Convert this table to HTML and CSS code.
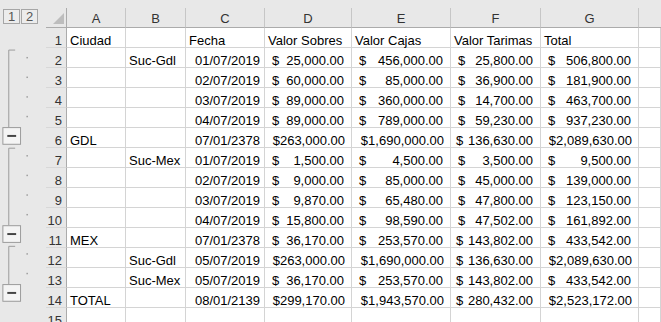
FILE: index.html
```html
<!DOCTYPE html>
<html lang="es">
<head>
<meta charset="utf-8">
<title>Hoja</title>
<link rel="stylesheet" href="styles.css">
</head>
<body>
<div class="app">
  <div class="outline">
    <div class="levels"><span class="lvl">1</span><span class="lvl">2</span></div>
    <svg class="groups" width="46" height="300" viewBox="0 0 46 300">
      <g stroke="#9a9a9a" stroke-width="1" fill="none">
        <path d="M15 22.5H8.5V101"/>
        <path d="M15 122.5H8.5V201"/>
        <path d="M15 222.5H8.5V261"/>
      </g>
      <g fill="#f4f4f4" stroke="#9a9a9a" stroke-width="1">
        <rect x="2.5" y="101.5" width="18" height="17"/>
        <rect x="2.5" y="201.5" width="18" height="17"/>
        <rect x="2.5" y="261.5" width="18" height="17"/>
      </g>
      <g fill="#444">
        <rect x="7" y="109" width="9" height="2"/>
        <rect x="7" y="209" width="9" height="2"/>
        <rect x="7" y="269" width="9" height="2"/>
      </g>
      <g fill="#9c9c9c">
        <rect x="26.5" y="29.5" width="1.5" height="1.5"/>
        <rect x="26.5" y="49.5" width="1.5" height="1.5"/>
        <rect x="26.5" y="69.5" width="1.5" height="1.5"/>
        <rect x="26.5" y="89.5" width="1.5" height="1.5"/>
        <rect x="26.5" y="129.5" width="1.5" height="1.5"/>
        <rect x="26.5" y="149.5" width="1.5" height="1.5"/>
        <rect x="26.5" y="169.5" width="1.5" height="1.5"/>
        <rect x="26.5" y="189.5" width="1.5" height="1.5"/>
        <rect x="26.5" y="229.5" width="1.5" height="1.5"/>
        <rect x="26.5" y="249.5" width="1.5" height="1.5"/>
      </g>
    </svg>
  </div>
  <div class="sheet">
    <div class="row head">
      <div class="corner"><svg width="11" height="11" viewBox="0 0 11 11"><path d="M11 0V11H0Z" fill="#bdbdbd"/></svg></div>
      <div class="ch">A</div><div class="ch">B</div><div class="ch">C</div><div class="ch">D</div><div class="ch">E</div><div class="ch">F</div><div class="ch">G</div><div class="ch last"></div>
    </div>
    <div class="row">
      <div class="rn">1</div>
      <div class="c">Ciudad</div><div class="c"></div><div class="c">Fecha</div><div class="c">Valor Sobres</div><div class="c">Valor Cajas</div><div class="c">Valor Tarimas</div><div class="c">Total</div><div class="c"></div>
    </div>
    <div class="row">
      <div class="rn">2</div>
      <div class="c"></div><div class="c">Suc-Gdl</div><div class="c d">01/07/2019</div>
      <div class="c m"><span>$</span><span>25,000.00</span></div>
      <div class="c m"><span>$</span><span>456,000.00</span></div>
      <div class="c m"><span>$</span><span>25,800.00</span></div>
      <div class="c m"><span>$</span><span>506,800.00</span></div><div class="c"></div>
    </div>
    <div class="row">
      <div class="rn">3</div>
      <div class="c"></div><div class="c"></div><div class="c d">02/07/2019</div>
      <div class="c m"><span>$</span><span>60,000.00</span></div>
      <div class="c m"><span>$</span><span>85,000.00</span></div>
      <div class="c m"><span>$</span><span>36,900.00</span></div>
      <div class="c m"><span>$</span><span>181,900.00</span></div><div class="c"></div>
    </div>
    <div class="row">
      <div class="rn">4</div>
      <div class="c"></div><div class="c"></div><div class="c d">03/07/2019</div>
      <div class="c m"><span>$</span><span>89,000.00</span></div>
      <div class="c m"><span>$</span><span>360,000.00</span></div>
      <div class="c m"><span>$</span><span>14,700.00</span></div>
      <div class="c m"><span>$</span><span>463,700.00</span></div><div class="c"></div>
    </div>
    <div class="row">
      <div class="rn">5</div>
      <div class="c"></div><div class="c"></div><div class="c d">04/07/2019</div>
      <div class="c m"><span>$</span><span>89,000.00</span></div>
      <div class="c m"><span>$</span><span>789,000.00</span></div>
      <div class="c m"><span>$</span><span>59,230.00</span></div>
      <div class="c m"><span>$</span><span>937,230.00</span></div><div class="c"></div>
    </div>
    <div class="row">
      <div class="rn">6</div>
      <div class="c">GDL</div><div class="c"></div><div class="c d">07/01/2378</div>
      <div class="c m t"><span>$</span><span>263,000.00</span></div>
      <div class="c m t"><span>$</span><span>1,690,000.00</span></div>
      <div class="c m f"><span>$</span><span>136,630.00</span></div>
      <div class="c m t"><span>$</span><span>2,089,630.00</span></div><div class="c"></div>
    </div>
    <div class="row">
      <div class="rn">7</div>
      <div class="c"></div><div class="c">Suc-Mex</div><div class="c d">01/07/2019</div>
      <div class="c m"><span>$</span><span>1,500.00</span></div>
      <div class="c m"><span>$</span><span>4,500.00</span></div>
      <div class="c m"><span>$</span><span>3,500.00</span></div>
      <div class="c m"><span>$</span><span>9,500.00</span></div><div class="c"></div>
    </div>
    <div class="row">
      <div class="rn">8</div>
      <div class="c"></div><div class="c"></div><div class="c d">02/07/2019</div>
      <div class="c m"><span>$</span><span>9,000.00</span></div>
      <div class="c m"><span>$</span><span>85,000.00</span></div>
      <div class="c m"><span>$</span><span>45,000.00</span></div>
      <div class="c m"><span>$</span><span>139,000.00</span></div><div class="c"></div>
    </div>
    <div class="row">
      <div class="rn">9</div>
      <div class="c"></div><div class="c"></div><div class="c d">03/07/2019</div>
      <div class="c m"><span>$</span><span>9,870.00</span></div>
      <div class="c m"><span>$</span><span>65,480.00</span></div>
      <div class="c m"><span>$</span><span>47,800.00</span></div>
      <div class="c m"><span>$</span><span>123,150.00</span></div><div class="c"></div>
    </div>
    <div class="row">
      <div class="rn">10</div>
      <div class="c"></div><div class="c"></div><div class="c d">04/07/2019</div>
      <div class="c m"><span>$</span><span>15,800.00</span></div>
      <div class="c m"><span>$</span><span>98,590.00</span></div>
      <div class="c m"><span>$</span><span>47,502.00</span></div>
      <div class="c m"><span>$</span><span>161,892.00</span></div><div class="c"></div>
    </div>
    <div class="row">
      <div class="rn">11</div>
      <div class="c">MEX</div><div class="c"></div><div class="c d">07/01/2378</div>
      <div class="c m"><span>$</span><span>36,170.00</span></div>
      <div class="c m"><span>$</span><span>253,570.00</span></div>
      <div class="c m f"><span>$</span><span>143,802.00</span></div>
      <div class="c m"><span>$</span><span>433,542.00</span></div><div class="c"></div>
    </div>
    <div class="row">
      <div class="rn">12</div>
      <div class="c"></div><div class="c">Suc-Gdl</div><div class="c d">05/07/2019</div>
      <div class="c m t"><span>$</span><span>263,000.00</span></div>
      <div class="c m t"><span>$</span><span>1,690,000.00</span></div>
      <div class="c m f"><span>$</span><span>136,630.00</span></div>
      <div class="c m t"><span>$</span><span>2,089,630.00</span></div><div class="c"></div>
    </div>
    <div class="row">
      <div class="rn">13</div>
      <div class="c"></div><div class="c">Suc-Mex</div><div class="c d">05/07/2019</div>
      <div class="c m"><span>$</span><span>36,170.00</span></div>
      <div class="c m"><span>$</span><span>253,570.00</span></div>
      <div class="c m f"><span>$</span><span>143,802.00</span></div>
      <div class="c m"><span>$</span><span>433,542.00</span></div><div class="c"></div>
    </div>
    <div class="row">
      <div class="rn">14</div>
      <div class="c">TOTAL</div><div class="c"></div><div class="c d">08/01/2139</div>
      <div class="c m t"><span>$</span><span>299,170.00</span></div>
      <div class="c m t"><span>$</span><span>1,943,570.00</span></div>
      <div class="c m f"><span>$</span><span>280,432.00</span></div>
      <div class="c m t"><span>$</span><span>2,523,172.00</span></div><div class="c"></div>
    </div>
    <div class="row">
      <div class="rn">15</div>
      <div class="c"></div><div class="c"></div><div class="c"></div><div class="c"></div><div class="c"></div><div class="c"></div><div class="c"></div><div class="c"></div>
    </div>
  </div>
</div>
</body>
</html>
```
FILE: styles.css
```css
html, body {
  margin: 0;
  padding: 0;
  background: #ffffff;
}
body {
  font-family: "Liberation Sans", Arial, sans-serif;
  font-size: 13px;
  color: #000;
  overflow: hidden;
}
.app {
  display: flex;
  width: 661px;
  height: 322px;
  overflow: hidden;
}
.outline {
  flex: 0 0 46px;
  width: 46px;
  background: #e8e8e8;
  display: flex;
  flex-direction: column;
}
.levels {
  height: 28px;
  box-sizing: border-box;
  padding: 9px 0 0 3px;
  display: flex;
  gap: 1px;
}
.lvl {
  box-sizing: border-box;
  width: 17px;
  height: 15px;
  border: 1px solid #a6a6a6;
  background: #ececec;
  color: #555;
  font-size: 13px;
  line-height: 13px;
  text-align: center;
}
.groups {
  display: block;
}
.sheet {
  flex: 1 1 auto;
  display: flex;
  flex-direction: column;
}
.row {
  display: grid;
  grid-template-columns: 21px 59px 60px 79px 87px 99px 90px 98px 1fr;
  height: 20px;
  flex: 0 0 20px;
}
.row.head {
  height: 28px;
  flex: 0 0 28px;
  box-sizing: border-box;
  padding-top: 8px;
  background: #e8e8e8;
}
.corner {
  box-sizing: border-box;
  height: 20px;
  border-right: 1px solid #ababab;
  border-bottom: 1px solid #ababab;
  display: flex;
  justify-content: flex-end;
  align-items: flex-end;
  padding: 0 2px 3px 0;
}
.corner svg {
  display: block;
}
.ch {
  box-sizing: border-box;
  height: 20px;
  border-right: 1px solid #c6c6c6;
  border-bottom: 1px solid #ababab;
  text-align: center;
  color: #333;
  padding-top: 2px;
  line-height: 17px;
}
.ch.last {
  border-right: none;
}
.rn {
  box-sizing: border-box;
  height: 20px;
  background: #e8e8e8;
  border-right: 1px solid #ababab;
  border-bottom: 1px solid #d8d8d8;
  text-align: right;
  padding: 5px 4px 0 0;
  line-height: 15px;
  color: #333;
}
.c {
  box-sizing: border-box;
  height: 20px;
  border-right: 1px solid #d4d4d4;
  border-bottom: 1px solid #d4d4d4;
  padding: 5px 3px 0 3px;
  line-height: 15px;
  white-space: nowrap;
}
.c.d {
  text-align: right;
  padding-right: 4px;
}
.c.m {
  display: flex;
  justify-content: space-between;
  padding-left: 7px;
  padding-right: 7px;
}
.c.m.f {
  padding-left: 5px;
}
.c.m.t {
  justify-content: flex-end;
  padding-left: 3px;
  padding-right: 6px;
}
```
